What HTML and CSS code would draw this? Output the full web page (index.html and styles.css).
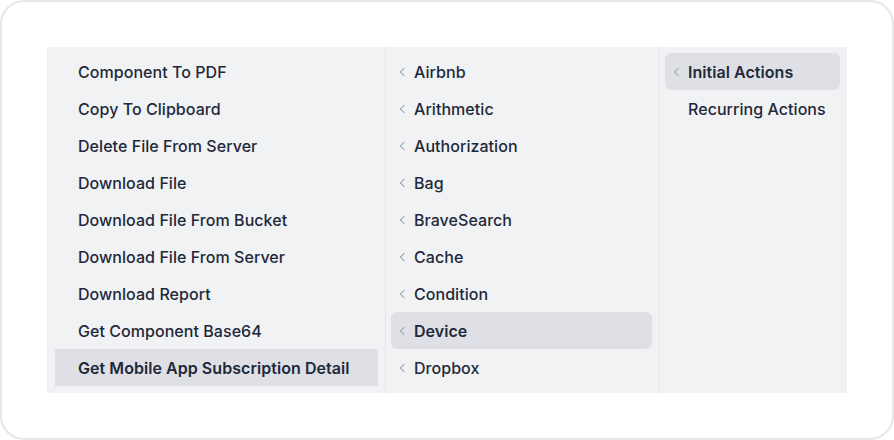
FILE: index.html
```html
<!DOCTYPE html>
<html>
<head>
<meta charset="utf-8">
<link rel="stylesheet" href="styles.css">
</head>
<body>
<div class="frame">
  <div class="menu">
    <ul class="col col1">
      <li class="item">Component To PDF</li>
      <li class="item">Copy To Clipboard</li>
      <li class="item">Delete File From Server</li>
      <li class="item">Download File</li>
      <li class="item">Download File From Bucket</li>
      <li class="item">Download File From Server</li>
      <li class="item">Download Report</li>
      <li class="item">Get Component Base64</li>
      <li class="item active square">Get Mobile App Subscription Detail</li>
    </ul>
    <ul class="col col2">
      <li class="item sub">Airbnb</li>
      <li class="item sub">Arithmetic</li>
      <li class="item sub">Authorization</li>
      <li class="item sub">Bag</li>
      <li class="item sub">BraveSearch</li>
      <li class="item sub">Cache</li>
      <li class="item sub">Condition</li>
      <li class="item sub active">Device</li>
      <li class="item sub">Dropbox</li>
    </ul>
    <ul class="col col3">
      <li class="item sub active">Initial Actions</li>
      <li class="item">Recurring Actions</li>
    </ul>
  </div>
</div>
</body>
</html>
```

FILE: styles.css
```css
html, body {
  margin: 0;
  padding: 0;
  background: #ffffff;
}
body {
  font-family: Inter, "Noto Sans", sans-serif;
  color: #1e293b;
}
.frame {
  box-sizing: border-box;
  width: 894px;
  height: 440px;
  border: 2px solid #e5e7eb;
  border-radius: 24px;
  padding: 45px;
}
.menu {
  display: flex;
  width: 800px;
  height: 346px;
  background: #f1f2f4;
}
.col {
  list-style: none;
  margin: 0;
  box-sizing: border-box;
  padding: 6px 7px 6px 8px;
}
.col1 { width: 338px; }
.col2 { width: 274px; border-left: 1px solid #e4e6ea; padding-left: 5px; }
.col3 { width: 188px; border-left: 1px solid #e4e6ea; padding-left: 5px; }
.item {
  position: relative;
  height: 37px;
  display: flex;
  align-items: center;
  padding-left: 23px;
  font-size: 16px;
  font-weight: 500;
  letter-spacing: 0.05px;
  border-radius: 6px;
  white-space: nowrap;
}
.item.square { border-radius: 0; }
.item.active {
  background: #dfe0e5;
  font-weight: 600;
}
.sub::before {
  content: "";
  position: absolute;
  left: 10px;
  top: 50%;
  width: 5px;
  height: 5px;
  border-left: 1.7px solid #9ca3af;
  border-bottom: 1.7px solid #9ca3af;
  transform: translateY(-50%) rotate(45deg);
}
```
